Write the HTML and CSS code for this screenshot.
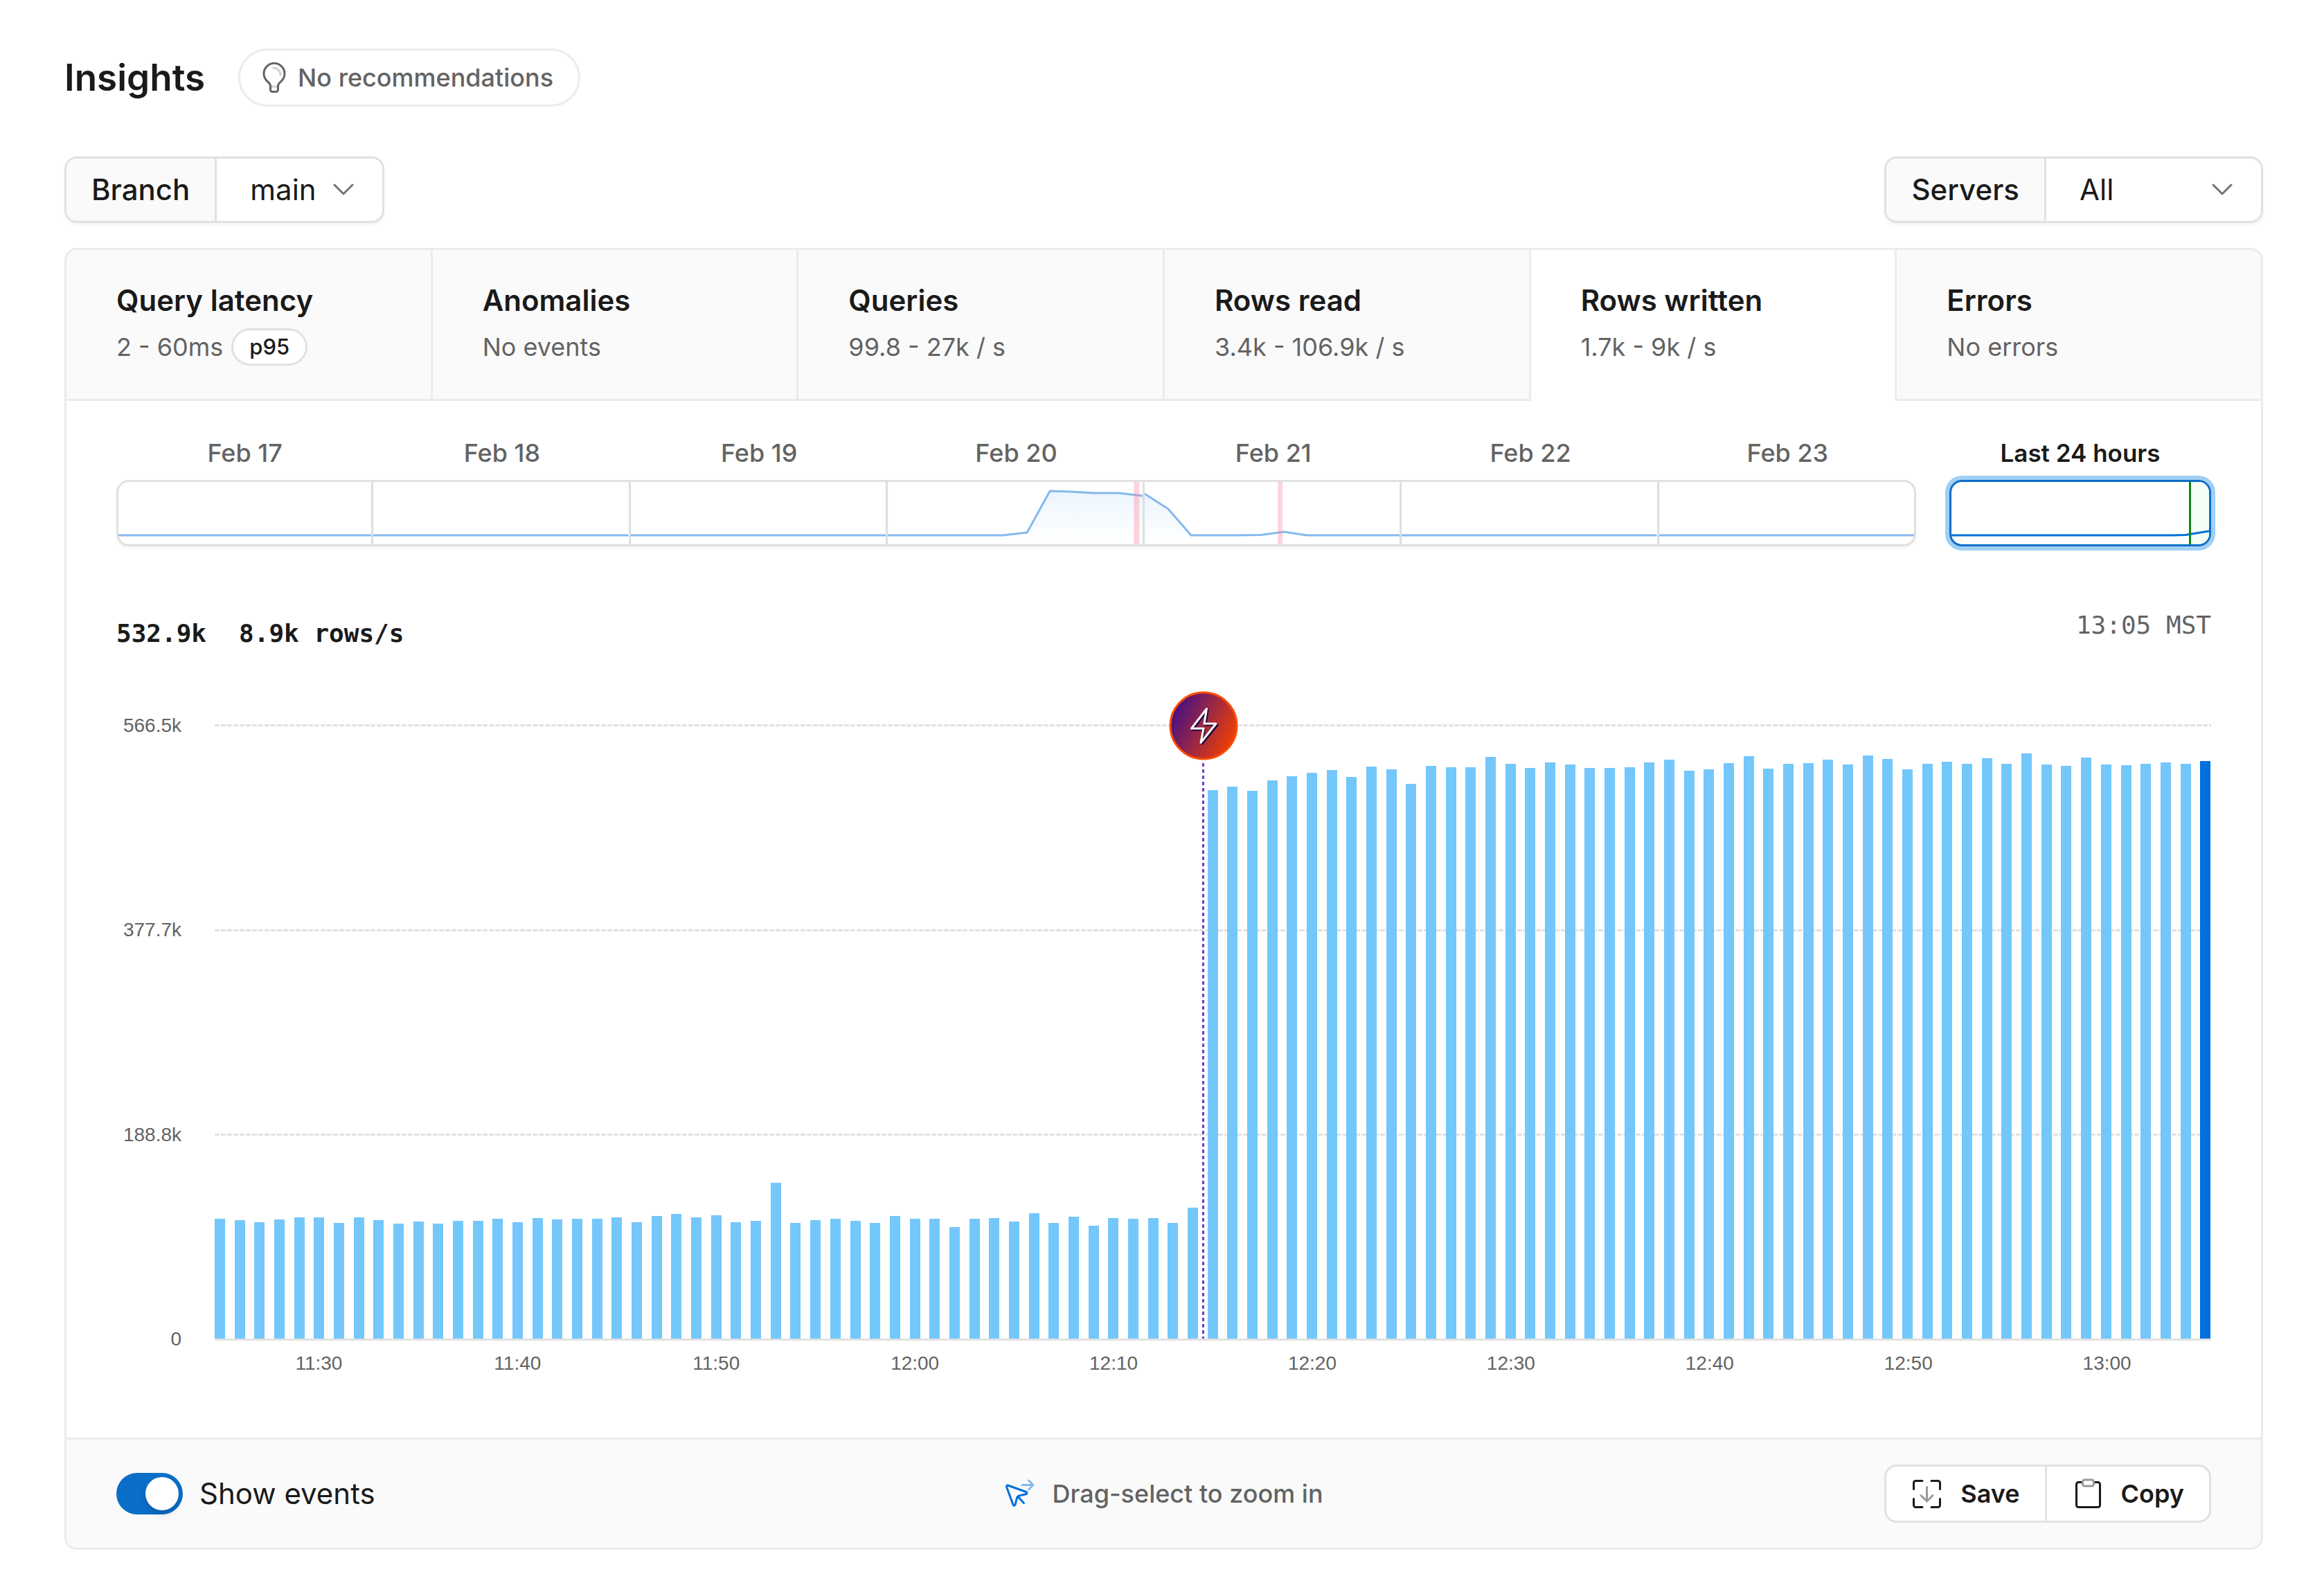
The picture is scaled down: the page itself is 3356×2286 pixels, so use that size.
FILE: index.html
```
<!DOCTYPE html>
<html lang="en">
<head>
    <meta charset="utf-8">
    <title>Insights</title>
    <link rel="stylesheet" href="styles.css">
</head>
<body>
    <header class="page-header">
        <h1>Insights</h1>
        <button class="pill" type="button">
            <svg class="bulb" viewBox="0 0 34 44" aria-hidden="true">
                <path class="faint" d="M12 35h10M16 8a10 10 0 0 1 10 10"/>
                <path d="M11.500 34v5.500a3 3 0 0 0 3 3h5a3 3 0 0 0 3-3V34c0-3 2-4.500 5.500-7.500A15 15 0 1 0 6 26.500c3.500 3 5.500 4.500 5.500 7.500z"/>
            </svg>
            No recommendations
        </button>
    </header>

    <div class="filters">
        <div class="field">
            <label for="branch">Branch</label>
            <div class="select">
                <select id="branch">
                    <option>main</option>
                </select>
                <svg class="chevron" viewBox="0 0 30 18" aria-hidden="true"><path d="M2 2l13 13L28 2"/></svg>
            </div>
        </div>
        <div class="field">
            <label for="servers">Servers</label>
            <div class="select wide">
                <select id="servers">
                    <option>All</option>
                </select>
                <svg class="chevron" viewBox="0 0 30 18" aria-hidden="true"><path d="M2 2l13 13L28 2"/></svg>
            </div>
        </div>
    </div>

    <main class="card">
        <div class="tabs" role="tablist">
            <button class="tab" role="tab" type="button">
                <span class="tab-title">Query latency</span>
                <span class="tab-sub">2 - 60ms <span class="badge">p95</span></span>
            </button>
            <button class="tab" role="tab" type="button">
                <span class="tab-title">Anomalies</span>
                <span class="tab-sub">No events</span>
            </button>
            <button class="tab" role="tab" type="button">
                <span class="tab-title">Queries</span>
                <span class="tab-sub">99.8 - 27k / s</span>
            </button>
            <button class="tab" role="tab" type="button">
                <span class="tab-title">Rows read</span>
                <span class="tab-sub">3.4k - 106.9k / s</span>
            </button>
            <button class="tab active" role="tab" type="button" aria-selected="true">
                <span class="tab-title">Rows written</span>
                <span class="tab-sub">1.7k - 9k / s</span>
            </button>
            <button class="tab" role="tab" type="button">
                <span class="tab-title">Errors</span>
                <span class="tab-sub">No errors</span>
            </button>
        </div>

        <section class="panel">
            <div class="timeline">
                <div class="days">
                    <button class="day" type="button">
                        <span class="day-label">Feb 17</span>
                        <span class="spark"><svg viewBox="0 0 368 90" preserveAspectRatio="none"><path d="M0 77H368"/></svg></span>
                    </button>
                    <button class="day" type="button">
                        <span class="day-label">Feb 18</span>
                        <span class="spark"><svg viewBox="0 0 368 90" preserveAspectRatio="none"><path d="M0 77H368"/></svg></span>
                    </button>
                    <button class="day" type="button">
                        <span class="day-label">Feb 19</span>
                        <span class="spark"><svg viewBox="0 0 368 90" preserveAspectRatio="none"><path d="M0 77H368"/></svg></span>
                    </button>
                    <button class="day" type="button">
                        <span class="day-label">Feb 20</span>
                        <span class="spark">
                            <svg viewBox="0 0 368 90" preserveAspectRatio="none">
                                <defs>
                                    <linearGradient id="fade" x1="0" y1="0" x2="0" y2="1">
                                        <stop offset="0" stop-color="#ebf5fd"/>
                                        <stop offset="1" stop-color="#ffffff"/>
                                    </linearGradient>
                                </defs>
                                <polygon fill="url(#fade)" points="166,77 201,73 234,13 265,14 297,16 333,16 368,20 368,84 166,84"/>
                                <path d="M0 77H166L201 73L234 13L265 14L297 16L333 16L368 20"/>
                                <rect class="anomaly" x="355" y="0" width="8" height="90"/>
                            </svg>
                        </span>
                    </button>
                    <button class="day" type="button">
                        <span class="day-label">Feb 21</span>
                        <span class="spark">
                            <svg viewBox="0 0 368 90" preserveAspectRatio="none">
                                <polygon fill="url(#fade)" points="0,17 34,39 67,77 67,84 0,84"/>
                                <path d="M0 17L34 39L67 77H134L168 76.500L201 72L234 77H368"/>
                                <rect class="anomaly" x="192" y="0" width="7" height="90"/>
                            </svg>
                        </span>
                    </button>
                    <button class="day" type="button">
                        <span class="day-label">Feb 22</span>
                        <span class="spark"><svg viewBox="0 0 368 90" preserveAspectRatio="none"><path d="M0 77H368"/></svg></span>
                    </button>
                    <button class="day" type="button">
                        <span class="day-label">Feb 23</span>
                        <span class="spark"><svg viewBox="0 0 368 90" preserveAspectRatio="none"><path d="M0 77H368"/></svg></span>
                    </button>
                </div>
                <button class="day last" type="button">
                    <span class="day-label">Last 24 hours</span>
                    <span class="spark">
                        <svg viewBox="0 0 372 90" preserveAspectRatio="none">
                            <rect class="range" x="344" y="0" width="28" height="90"/>
                            <path d="M0 77H320L338 76.500L372 71"/>
                            <path class="range-start" d="M344.500 0V90"/>
                        </svg>
                    </span>
                </button>
            </div>

            <div class="summary">
                <div class="totals"><span>532.9k</span><span>8.9k rows/s</span></div>
                <time>13:05 MST</time>
            </div>

            <div class="chart">
                <div class="y-axis">
                    <span>566.5k</span>
                    <span>377.7k</span>
                    <span>188.8k</span>
                    <span>0</span>
                </div>
                <div class="plot">
                    <div class="grid"><i></i><i></i><i></i></div>
                    <div class="bars" id="bars"></div>
                    <div class="event">
                        <svg class="bolt" viewBox="-50 -50 100 100" aria-label="Deploy event">
                            <defs>
                                <linearGradient id="deploy" x1="0" y1="0.200" x2="1" y2="0.700">
                                    <stop offset="0" stop-color="#3b0d8c"/>
                                    <stop offset="1" stop-color="#f54000"/>
                                </linearGradient>
                            </defs>
                            <circle r="48" fill="url(#deploy)" stroke="#ff4b00" stroke-width="3"/>
                            <path class="shadow" d="M6 -23L3 -1H20L-2 26L1 6H-16Z"/>
                            <path d="M4.500 -24.500L1 -3H18L-4 24.500L0 4H-17.500Z"/>
                        </svg>
                    </div>
                </div>
                <div class="x-axis">
                    <span>11:30</span>
                    <span>11:40</span>
                    <span>11:50</span>
                    <span>12:00</span>
                    <span>12:10</span>
                    <span>12:20</span>
                    <span>12:30</span>
                    <span>12:40</span>
                    <span>12:50</span>
                    <span>13:00</span>
                </div>
            </div>
        </section>

        <footer class="card-footer">
            <label class="toggle">
                <input type="checkbox" checked>
                Show events
            </label>
            <div class="hint">
                <svg class="icon" viewBox="0 0 45 45" aria-hidden="true">
                    <path class="light" d="M26 9.500H42M35.500 3L42 9.500L35.500 16"/>
                    <path d="M5.500 10L32 19.500Q34 21 32 22.500L22 25Q19 26 18.500 28L16 38Q14.500 40.500 13 38L3.500 12Q3.500 9.500 5.500 10ZM20 26.500L28.500 35.500"/>
                </svg>
                Drag-select to zoom in
            </div>
            <div class="actions">
                <button type="button">
                    <svg class="icon" viewBox="0 0 45 45" aria-hidden="true">
                        <path class="soft" d="M22.500 12.500V33M14 24.500L22.500 33L31 24.500"/>
                        <path d="M3.500 15.500V6.500a3 3 0 0 1 3-3H16M29 3.500h9.500a3 3 0 0 1 3 3v9M3.500 29.500v9a3 3 0 0 0 3 3H16M29 41.500h9.500a3 3 0 0 0 3-3v-9"/>
                    </svg>
                    Save
                </button>
                <button type="button">
                    <svg class="icon" viewBox="0 0 45 45" aria-hidden="true">
                        <path d="M14 5.500H9.500a3 3 0 0 0-3 3v30a3 3 0 0 0 3 3h28a3 3 0 0 0 3-3v-30a3 3 0 0 0-3-3H32"/>
                        <rect class="soft" x="15.500" y="2" width="16" height="9" rx="3"/>
                    </svg>
                    Copy
                </button>
            </div>
        </footer>
    </main>

    <script>
        // rows written per minute, in thousands, 11:25 to 13:05
        var MAX = 566.5;
        var ROWS = [
            110.6, 109.1, 107.4, 110, 111.9, 111.9, 106.6, 111.7, 109.3, 106.1,
            107.9, 106.1, 108.5, 108.3, 110.2, 107.2, 111.3, 109.8, 110.6, 110.6,
            111.7, 107, 113.2, 115.1, 111.5, 113.8, 107.4, 108.7, 143.9, 106.6,
            109.1, 110.6, 108.7, 106.4, 113.2, 110.6, 110.6, 102.8, 110.8, 111.3,
            107.9, 115.6, 106.4, 112.4, 104.2, 111.3, 110.8, 111.1, 106.4, 120.4,
            505.9, 508.9, 505.3, 514.9, 518.5, 522.1, 524.5, 517.9, 527.5, 524.9,
            511.5, 527.9, 527, 527.2, 536.6, 530.2, 526.4, 531.1, 529.4, 526.2,
            526.2, 527, 531.5, 534.1, 523.8, 525.1, 530.9, 537.1, 525.8, 530.2,
            530.7, 533.9, 529.4, 537.5, 534.7, 525.3, 530.2, 532.1, 530.4, 535.1,
            530.2, 539.4, 529.6, 528.5, 536, 529.6, 528.9, 530.4, 531.7, 529.8,
            532.9
        ];

        var bars = document.querySelector('#bars');
        for (let i = 0; i < ROWS.length; i++) {
            var bar = document.createElement('div');
            bar.className = i == ROWS.length - 1 ? 'bar current' : 'bar';
            bar.style.height = (ROWS[i] / MAX * 100) + '%';
            bars.appendChild(bar);
        }
    </script>
</body>
</html>
```
FILE: styles.css
```
* {
    box-sizing: border-box;
}

body {
    margin: 0;
    padding: 70px 88px 48px 93px;
    background: #fff;
    color: #1a1a1a;
    font-family: Inter, "Liberation Sans", sans-serif;
    font-size: 36px;
    line-height: 54px;
}

button,
select {
    margin: 0;
    padding: 0;
    border: 0;
    border-radius: 0;
    background: none;
    color: inherit;
    font: inherit;
}

svg {
    fill: none;
    stroke: currentColor;
    stroke-width: 3px;
    stroke-linecap: round;
    stroke-linejoin: round;
}

/* header */
.page-header {
    display: flex;
    align-items: center;
    gap: 48px;
}

h1 {
    margin: 0;
    font-size: 53px;
    font-weight: 600;
}

.pill {
    display: flex;
    align-items: center;
    gap: 17px;
    height: 84px;
    padding: 0 36px 0 32px;
    border: 3px solid #ebebeb;
    border-radius: 42px;
    color: #636363;
    font-weight: 500;
}

.bulb {
    width: 34px;
    height: 44px;
}

.faint {
    stroke: #d0d0d0;
}

/* filters */
.filters {
    display: flex;
    justify-content: space-between;
    margin: 72px 0 36px;
}

.field {
    display: flex;
    height: 96px;
    border: 3px solid #e1e1e1;
    border-radius: 18px;
    box-shadow: 0 3px 5px rgba(0, 0, 0, 0.05);
    font-size: 42px;
    line-height: 90px;
    overflow: hidden;
}

.field label {
    padding: 0 36px;
    border-right: 3px solid #e1e1e1;
    background: #fafafa;
    font-weight: 500;
}

.select {
    display: grid;
    align-items: center;
    width: 239px;
}

.select.wide {
    width: 310px;
}

.select select,
.chevron {
    grid-area: 1 / 1;
}

.select select {
    width: 100%;
    height: 90px;
    padding-left: 48px;
    appearance: none;
}

.chevron {
    justify-self: end;
    width: 30px;
    height: 18px;
    margin-right: 41px;
    color: #737373;
    pointer-events: none;
}

/* card */
.card {
    border: 3px solid #ebebeb;
    border-radius: 18px;
    overflow: hidden;
}

/* the last tab's divider is tucked under the card border */
.tabs {
    display: grid;
    grid-template-columns: repeat(6, 1fr);
    margin-right: -3px;
}

.tab {
    display: flex;
    flex-direction: column;
    gap: 12px;
    padding: 45px 36px 48px 72px;
    border-right: 3px solid #ebebeb;
    border-bottom: 3px solid #ebebeb;
    background: #fafafa;
    text-align: left;
}

.tab.active {
    border-bottom-color: #fff;
    background: #fff;
}

.tab-title {
    font-size: 42px;
    font-weight: 600;
    line-height: 56px;
}

.tab-sub {
    display: flex;
    gap: 12px;
    color: #636363;
}

.badge {
    padding: 0 23px;
    border: 3px solid #e1e1e1;
    border-radius: 27px;
    background: #fff;
    color: #1a1a1a;
    font-size: 31px;
    font-weight: 500;
    line-height: 48px;
}

.panel {
    padding: 48px 72px 89px;
}

/* day picker */
.timeline {
    display: flex;
    gap: 48px;
}

.days {
    display: flex;
    flex: 1;
}

.day {
    display: flex;
    flex: 1;
    flex-direction: column;
    gap: 12px;
    color: #636363;
    font-weight: 500;
    text-align: center;
}

.day-label,
.spark {
    width: 100%;
}

.spark {
    display: flex;
    height: 96px;
    border: 3px solid #e1e1e1;
    border-left: 0;
    box-shadow: 0 3px 5px rgba(0, 0, 0, 0.04);
    color: #84b9ed;
    overflow: hidden;
}

.spark svg {
    width: 100%;
    height: 100%;
}

.spark path {
    vector-effect: non-scaling-stroke;
    stroke-linecap: butt;
}

.spark polygon,
.spark rect {
    stroke: none;
}

.anomaly {
    fill: rgba(255, 120, 145, 0.33);
}

.day:first-child .spark {
    border-left: 3px solid #e1e1e1;
    border-radius: 18px 0 0 18px;
}

.days .day:last-child .spark {
    border-radius: 0 18px 18px 0;
}

.day.last {
    flex: none;
    width: 378px;
    color: #1a1a1a;
    font-size: 35px;
    font-weight: 600;
}

.day.last .spark {
    border: 3px solid #0a6ec8;
    border-radius: 18px;
    box-shadow: 0 0 0 6px #9fcff4;
    color: #0070dc;
}

.range {
    fill: #f4fdf6;
}

.spark .range-start {
    stroke: #0a8a14;
}

/* totals */
.summary {
    display: flex;
    justify-content: space-between;
    align-items: flex-start;
    margin-top: 87px;
    font-family: "DejaVu Sans Mono", monospace;
}

.totals {
    display: flex;
    gap: 47px;
    padding-top: 12px;
    font-weight: 700;
}

.summary time {
    color: #636363;
}

/* chart */
.chart {
    display: grid;
    grid-template-columns: 94px 1fr;
    column-gap: 48px;
    margin-top: 104px;
    color: #636363;
    font-family: "Liberation Sans", Arial, sans-serif;
    font-size: 28px;
    line-height: 28px;
}

.y-axis {
    display: flex;
    flex-direction: column;
    justify-content: space-between;
    margin: -12px 0;
    text-align: right;
}

.plot {
    display: grid;
    position: relative;
    height: 890px;
    border-bottom: 3px solid #e1e1e1;
}

.grid,
.bars {
    grid-area: 1 / 1;
    height: 887px;
}

.grid {
    display: grid;
    grid-template-rows: repeat(3, 1fr);
}

.grid i {
    height: 3px;
    background: repeating-linear-gradient(90deg, #e1e1e1 0 7px, #fff 7px 9px);
}

.bars {
    display: flex;
    justify-content: space-between;
    align-items: flex-end;
}

.bar {
    width: 15px;
    background: #74c7fa;
}

.bar.current {
    background: #0070dc;
}

/* deploy marker sits on top of the bars */
.event {
    position: absolute;
    top: -48px;
    bottom: 0;
    left: 49.53%;
    display: flex;
    flex-direction: column;
    align-items: center;
    width: 100px;
    margin-left: -50px;
}

.bolt {
    width: 100px;
    height: 100px;
    flex: none;
    color: #fff;
}

.bolt .shadow {
    stroke: #1c0a3c;
}

.event::after {
    content: "";
    flex: 1;
    width: 3px;
    margin-top: 4px;
    background: repeating-linear-gradient(#6b3fc9 0 5px, transparent 5px 9px);
}

.x-axis {
    display: flex;
    grid-column: 2;
    margin-top: 15px;
    padding: 0 7px;
    line-height: 36px;
}

.x-axis span {
    flex: 1;
    text-align: center;
}

/* footer */
.card-footer {
    display: grid;
    grid-template-columns: 1fr auto 1fr;
    align-items: center;
    padding: 36px 72px;
    border-top: 3px solid #ebebeb;
    background: #fafafa;
}

.toggle {
    display: flex;
    align-items: center;
    gap: 24px;
    font-size: 42px;
}

.toggle input {
    display: flex;
    justify-content: flex-end;
    width: 96px;
    height: 60px;
    margin: 0;
    padding: 6px;
    border-radius: 30px;
    background: #0a6ec8;
    appearance: none;
}

.toggle input::before {
    content: "";
    width: 48px;
    height: 48px;
    border-radius: 50%;
    background: #fff;
    box-shadow: 0 6px 10px rgba(0, 0, 0, 0.15);
}

.icon {
    flex: none;
    width: 45px;
    height: 45px;
}

.hint {
    display: flex;
    align-items: center;
    gap: 24px;
    color: #636363;
    font-weight: 500;
}

.hint .icon {
    color: #0070dc;
}

.light {
    stroke: #84b9ed;
}

.soft {
    stroke: #999;
}

.actions {
    display: flex;
    justify-self: end;
    height: 84px;
    border: 3px solid #e1e1e1;
    border-radius: 18px;
    background: #fff;
    overflow: hidden;
}

.actions button {
    display: flex;
    align-items: center;
    gap: 26px;
    padding: 0 36px;
    font-weight: 600;
}

.actions button + button {
    border-left: 3px solid #e1e1e1;
}
```
